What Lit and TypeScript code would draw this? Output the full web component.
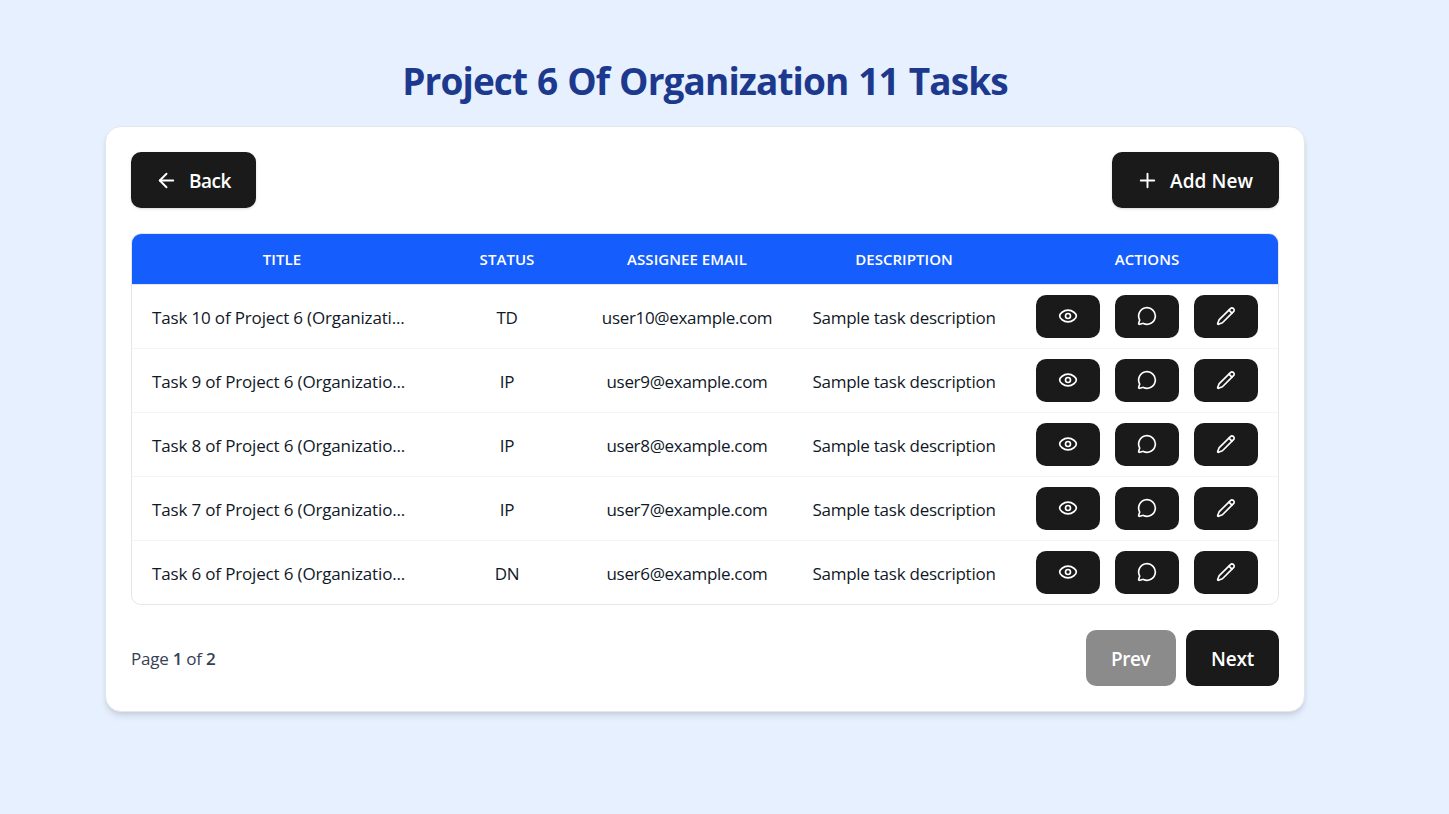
import { LitElement, html, css, svg } from "lit";
import { customElement } from "lit/decorators.js";

const icons = {
  back: svg`<path d="m12 19-7-7 7-7"/><path d="M19 12H5"/>`,
  plus: svg`<path d="M5 12h14"/><path d="M12 5v14"/>`,
  eye: svg`<path d="M2 12c0-2.600 4.400-7 10-7s10 4.400 10 7-4.400 7-10 7S2 14.600 2 12z"/><circle cx="12" cy="12" r="3"/>`,
  chat: svg`<path d="M2.992 16.342a2 2 0 0 1 .094 1.167l-1.065 3.29a1 1 0 0 0 1.236 1.168l3.413-.998a2 2 0 0 1 1.099.092 10 10 0 1 0-4.777-4.719"/>`,
  pencil: svg`<path d="M17.300 3.100a2.600 2.600 0 1 1 3.700 3.700L8 19.800a3 3 0 0 1-1.100.700L3 22a.8.8 0 0 1-1-1l1.500-3.900a3 3 0 0 1 .7-1.100z"/><path d="m15.500 5 3.600 3.600"/>`,
};

const icon = (name: keyof typeof icons) =>
  html`<svg class="icon" viewBox="0 0 24 24" aria-hidden="true">${icons[name]}</svg>`;

const tasks = [
  { n: 10, status: "TD", title: "Task 10 of Project 6 (Organizati..." },
  { n: 9, status: "IP", title: "Task 9 of Project 6 (Organizatio..." },
  { n: 8, status: "IP", title: "Task 8 of Project 6 (Organizatio..." },
  { n: 7, status: "IP", title: "Task 7 of Project 6 (Organizatio..." },
  { n: 6, status: "DN", title: "Task 6 of Project 6 (Organizatio..." },
];

@customElement("app-root")
export class AppRoot extends LitElement {
  static styles = css`
    :host {
      display: block;
      box-sizing: border-box;
      min-height: 814px;
      padding: 56px 144px 0 105px;
      background: #e6f0ff;
      font-family: "Segoe UI", "Open Sans", "Noto Sans", sans-serif;
      color: #101828;
    }
    * { box-sizing: border-box; }
    h1 {
      margin: 0 0 20px;
      height: 50px;
      line-height: 50px;
      text-align: center;
      font-size: 37px;
      font-weight: 700;
      letter-spacing: -0.9px;
      word-spacing: 1.2px;
      color: #1c398e;
      white-space: nowrap;
    }
    .card {
      height: 586px;
      padding: 25px;
      border: 1px solid #e5e7eb;
      border-radius: 16px;
      background: #fff;
      box-shadow: 0 5px 7.5px -1px rgba(0, 0, 0, 0.1), 0 2.5px 5px -2.5px rgba(0, 0, 0, 0.1);
    }
    .bar { display: flex; justify-content: space-between; align-items: center; }
    .btn {
      display: flex;
      align-items: center;
      gap: 10px;
      height: 56px;
      padding: 2px 0 0 25px;
      border: 0;
      border-radius: 10px;
      background: #1a1a1a;
      color: #fff;
      font-family: inherit;
      font-size: 19px;
      font-weight: 640;
      letter-spacing: -0.5px;
      white-space: nowrap;
      box-shadow: 0 1px 3px rgba(0, 0, 0, 0.12), 0 1px 2px -1px rgba(0, 0, 0, 0.1);
    }
    .btn .icon { width: 23px; height: 23px; margin: 0 1px 2px -1px; stroke-width: 2; }
    .back { width: 125px; }
    .add { width: 167px; letter-spacing: 0.08px; }
    .prev { width: 90px; opacity: 0.5; box-shadow: none; }
    .next { width: 93px; letter-spacing: -0.2px; box-shadow: none; }
    .icon {
      display: block;
      width: 20px;
      height: 20px;
      fill: none;
      stroke: currentColor;
      stroke-width: 2;
      stroke-linecap: round;
      stroke-linejoin: round;
    }
    .table {
      margin: 25px 0;
      border: 1px solid #e5e7eb;
      border-radius: 10px;
      overflow: hidden;
    }
    .row {
      display: grid;
      grid-template-columns: 300px 150px 210px 224px 262px;
      align-items: center;
      justify-items: center;
      height: 64px;
      border-bottom: 1px solid #f3f4f6;
      font-size: 17px;
      letter-spacing: -0.25px;
      white-space: nowrap;
    }
    .row:last-child { height: 63px; border-bottom: 0; }
    .head {
      height: 51px;
      border-bottom-color: #e5e7eb;
      background: #155dfc;
      background-clip: padding-box;
      color: #fff;
      font-size: 15px;
      font-weight: 600;
      letter-spacing: 0.05px;
    }
    .cell { padding-top: 2px; }
    .title { justify-self: start; padding-left: 20px; letter-spacing: -0.16px; }
    .email { letter-spacing: -0.32px; }
    .actions { display: flex; gap: 15px; }
    .act {
      display: flex;
      justify-content: center;
      width: 64px;
      height: 43px;
      padding: 11px 0 0;
      border: 0;
      border-radius: 10px;
      background: #1a1a1a;
      color: #fff;
    }
    .page { font-size: 17px; letter-spacing: -0.25px; color: #364153; }
    .page b { font-weight: 600; }
    .pager { display: flex; gap: 10px; }
  `;

  render() {
    return html`
      <h1>Project 6 Of Organization 11 Tasks</h1>
      <main class="card">
        <div class="bar">
          <button class="btn back">${icon("back")}<span>Back</span></button>
          <button class="btn add">${icon("plus")}<span>Add New</span></button>
        </div>
        <div class="table">
          <div class="row head">
            <span>TITLE</span><span>STATUS</span><span>ASSIGNEE EMAIL</span><span>DESCRIPTION</span><span>ACTIONS</span>
          </div>
          ${tasks.map(
            (t) => html`<div class="row">
              <span class="cell title">${t.title}</span>
              <span class="cell">${t.status}</span>
              <span class="cell email">user${t.n}@example.com</span>
              <span class="cell">Sample task description</span>
              <div class="actions">
                <button class="act" aria-label="View">${icon("eye")}</button>
                <button class="act" aria-label="Comments">${icon("chat")}</button>
                <button class="act" aria-label="Edit">${icon("pencil")}</button>
              </div>
            </div>`
          )}
        </div>
        <div class="bar">
          <span class="page">Page <b>1</b> of <b>2</b></span>
          <div class="pager">
            <button class="btn prev">Prev</button>
            <button class="btn next">Next</button>
          </div>
        </div>
      </main>
    `;
  }
}
